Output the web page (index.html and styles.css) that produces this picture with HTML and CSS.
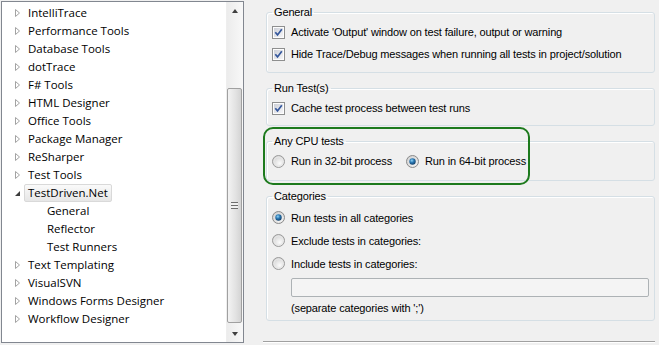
FILE: index.html
```html
<!DOCTYPE html>
<html lang="en">
<head>
    <meta charset="UTF-8">
    <title>Options - TestDriven.Net</title>
    <link rel="stylesheet" href="styles.css">
</head>
<body>
<svg class="defs" aria-hidden="true">
    <defs>
        <linearGradient id="cbFill" x1="0" y1="0" x2="1" y2="1">
            <stop offset="0" stop-color="#cdd0d8"/>
            <stop offset="1" stop-color="#f6f6f8"/>
        </linearGradient>
        <radialGradient id="rdFill" cx="0.6" cy="0.65" r="0.7">
            <stop offset="0" stop-color="#fbfbfb"/>
            <stop offset="1" stop-color="#cfcfcf"/>
        </radialGradient>
        <radialGradient id="rdDot" cx="0.4" cy="0.35" r="0.7">
            <stop offset="0" stop-color="#8fd3f5"/>
            <stop offset="0.45" stop-color="#2b79b4"/>
            <stop offset="1" stop-color="#0f3a63"/>
        </radialGradient>
        <symbol id="cb" viewBox="0 0 13 13">
            <rect x="0.5" y="0.5" width="12" height="12" fill="#fdfdfd" stroke="#8e8f8f"/>
            <rect x="2" y="2" width="9" height="9" fill="url(#cbFill)"/>
            <path d="M3.3 6.3 L5.5 8.9 L9.8 3.3" fill="none" stroke="#34579c" stroke-width="1.7"/>
        </symbol>
        <symbol id="rd" viewBox="0 0 13 13">
            <circle cx="6.5" cy="6.5" r="6" fill="url(#rdFill)" stroke="#9a9a9a"/>
            <circle cx="6.5" cy="6.5" r="4.5" fill="none" stroke="#e9e9e9"/>
        </symbol>
        <symbol id="rdOn" viewBox="0 0 13 13">
            <circle cx="6.5" cy="6.5" r="6" fill="url(#rdFill)" stroke="#8a8a8a"/>
            <circle cx="6.5" cy="6.5" r="3.2" fill="url(#rdDot)"/>
        </symbol>
        <symbol id="closed" viewBox="0 0 10 18">
            <path d="M1.5 5.5 L5.5 9 L1.5 12.5 Z" fill="#fff" stroke="#a3a3a3"/>
        </symbol>
        <symbol id="open" viewBox="0 0 10 18">
            <path d="M6 7 L6 12 L1 12 Z" fill="#3c3c3c"/>
        </symbol>
    </defs>
</svg>

<div class="window">
    <div class="tree">
        <ul class="nodes">
            <li class="node"><svg class="twisty"><use href="#closed"/></svg><span class="label">IntelliTrace</span></li>
            <li class="node"><svg class="twisty"><use href="#closed"/></svg><span class="label">Performance Tools</span></li>
            <li class="node"><svg class="twisty"><use href="#closed"/></svg><span class="label">Database Tools</span></li>
            <li class="node"><svg class="twisty"><use href="#closed"/></svg><span class="label">dotTrace</span></li>
            <li class="node"><svg class="twisty"><use href="#closed"/></svg><span class="label">F# Tools</span></li>
            <li class="node"><svg class="twisty"><use href="#closed"/></svg><span class="label">HTML Designer</span></li>
            <li class="node"><svg class="twisty"><use href="#closed"/></svg><span class="label">Office Tools</span></li>
            <li class="node"><svg class="twisty"><use href="#closed"/></svg><span class="label">Package Manager</span></li>
            <li class="node"><svg class="twisty"><use href="#closed"/></svg><span class="label">ReSharper</span></li>
            <li class="node"><svg class="twisty"><use href="#closed"/></svg><span class="label">Test Tools</span></li>
            <li class="node"><svg class="twisty"><use href="#open"/></svg><span class="label selected">TestDriven.Net</span></li>
            <li class="node child"><span class="twisty"></span><span class="label">General</span></li>
            <li class="node child"><span class="twisty"></span><span class="label">Reflector</span></li>
            <li class="node child"><span class="twisty"></span><span class="label">Test Runners</span></li>
            <li class="node"><svg class="twisty"><use href="#closed"/></svg><span class="label">Text Templating</span></li>
            <li class="node"><svg class="twisty"><use href="#closed"/></svg><span class="label">VisualSVN</span></li>
            <li class="node"><svg class="twisty"><use href="#closed"/></svg><span class="label">Windows Forms Designer</span></li>
            <li class="node"><svg class="twisty"><use href="#closed"/></svg><span class="label">Workflow Designer</span></li>
        </ul>
        <div class="scrollbar">
            <div class="sb-btn"><span class="arrow up"></span></div>
            <div class="sb-track">
                <div class="sb-thumb"><span class="grip"></span></div>
            </div>
            <div class="sb-btn"><span class="arrow down"></span></div>
        </div>
    </div>

    <div class="options">
        <fieldset class="group">
            <legend>General</legend>
            <label class="row"><svg class="box"><use href="#cb"/></svg>Activate 'Output' window on test failure, output or warning</label>
            <label class="row"><svg class="box"><use href="#cb"/></svg>Hide Trace/Debug messages when running all tests in project/solution</label>
        </fieldset>

        <fieldset class="group run">
            <legend>Run Test(s)</legend>
            <label class="row"><svg class="box"><use href="#cb"/></svg>Cache test process between test runs</label>
        </fieldset>

        <fieldset class="group cpu">
            <legend>Any CPU tests</legend>
            <div class="row">
                <label class="choice"><svg class="box"><use href="#rd"/></svg>Run in 32-bit process</label>
                <label class="choice"><svg class="box"><use href="#rdOn"/></svg>Run in 64-bit process</label>
            </div>
        </fieldset>

        <fieldset class="group categories">
            <legend>Categories</legend>
            <label class="row"><svg class="box"><use href="#rdOn"/></svg>Run tests in all categories</label>
            <label class="row"><svg class="box"><use href="#rd"/></svg>Exclude tests in categories:</label>
            <label class="row"><svg class="box"><use href="#rd"/></svg>Include tests in categories:</label>
            <div class="textbox"></div>
            <div class="hint">(separate categories with ';')</div>
        </fieldset>

        <div class="separator"></div>

        <!-- highlight drawn over the screenshot -->
        <div class="highlight"></div>
    </div>
</div>
</body>
</html>
```

FILE: styles.css
```css
* {
    box-sizing: border-box;
}

body {
    margin: 0;
    background-color: #f0f0f0;
    font-family: "Liberation Sans", Arial, sans-serif;
    font-size: 11px;
    letter-spacing: -0.14px;
    color: #000;
}

.defs {
    position: absolute;
    width: 0;
    height: 0;
}

.window {
    display: flex;
    width: 659px;
    height: 345px;
    overflow: hidden;
}

/* Tree view on the left */
.tree {
    display: flex;
    width: 243px;
    height: 342px;
    margin: 1px 0 0 1px;
    border: 1px solid #828790;
    background-color: #fff;
}

.nodes {
    flex: 1;
    margin: 0;
    padding: 2px 0 0;
    list-style: none;
    font-family: "Open Sans", "Noto Sans", sans-serif;
    font-size: 11.5px;
    letter-spacing: 0;
    color: #000;
}

.node {
    display: flex;
    align-items: center;
    height: 18px;
    padding-left: 12px;
}

.node.child {
    padding-left: 31px;
}

.twisty {
    flex: 0 0 10px;
    width: 10px;
    height: 18px;
}

.label {
    padding: 0 3px;
    line-height: 16px;
    border: 1px solid transparent;
    border-radius: 2px;
    white-space: nowrap;
}

.label.selected {
    border-color: #d9d9d9;
    background: linear-gradient(#fafafa, #e6e6e6);
}

/* Scrollbar */
.scrollbar {
    display: flex;
    flex-direction: column;
    width: 17px;
    background: linear-gradient(to right, #ececec, #f8f8f8);
    border-left: 1px solid #eeeeee;
}

.sb-btn {
    display: flex;
    align-items: center;
    justify-content: center;
    height: 17px;
}

.arrow {
    width: 0;
    height: 0;
    border-left: 3.5px solid transparent;
    border-right: 3.5px solid transparent;
}

.arrow.up {
    border-bottom: 4px solid #404040;
}

.arrow.down {
    border-top: 4px solid #404040;
}

.sb-track {
    flex: 1;
}

.sb-thumb {
    display: flex;
    align-items: center;
    justify-content: center;
    height: 235px;
    margin: 69px 1px 0 0;
    border: 1px solid #a0a0a0;
    border-radius: 2px;
    background: linear-gradient(to right, #f3f3f3, #e2e2e2 60%, #d4d4d4);
}

.grip {
    width: 7px;
    height: 7px;
    background: repeating-linear-gradient(#6e6e6e 0 1px, #f0f0f0 1px 3px);
}

/* Options page */
.options {
    position: relative;
    flex: 1;
    padding: 5px 4px 0 22px;
}

.group {
    margin: 0 0 8px;
    padding: 2px 5px 7px;
    min-width: 0;
    border: 1px solid #d5dfe5;
    border-radius: 3px;
    box-shadow: inset 1px 1px 0 #fff;
}

.group legend {
    padding: 0 2px;
    line-height: 14px;
}

.row {
    display: flex;
    align-items: center;
    gap: 6px;
    height: 22px;
    white-space: nowrap;
}

.box {
    flex: 0 0 13px;
    width: 13px;
    height: 13px;
}

.choice {
    display: flex;
    align-items: center;
    gap: 6px;
    margin-right: 8px;
}

.group.run {
    padding-bottom: 6px;
}

.group.cpu {
    padding-bottom: 8px;
}

.categories {
    padding-top: 3px;
    padding-bottom: 5px;
}

.categories .row {
    height: 23px;
}

.textbox {
    height: 19px;
    margin: 3px 0 0 19px;
    border: 1px solid #adb2b5;
    border-radius: 2px;
    background-color: #f4f4f4;
}

.hint {
    margin: 4px 0 0 19px;
    line-height: 14px;
}

.separator {
    margin: 20px 0 0 -3px;
    border-top: 1px solid #a0a0a0;
    border-bottom: 1px solid #fff;
}

.highlight {
    position: absolute;
    left: 19px;
    top: 127px;
    width: 267px;
    height: 58px;
    border: 2px solid #1d7a1d;
    border-radius: 10px;
}
```
